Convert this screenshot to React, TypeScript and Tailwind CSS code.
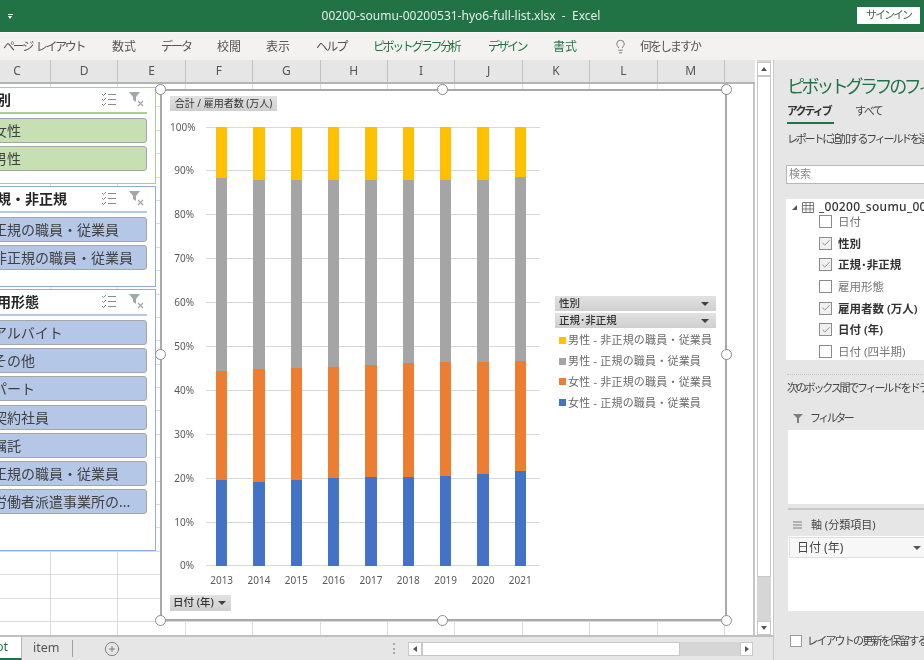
import React from "react";
import { Check, CirclePlus, Lightbulb } from "lucide-react";

const TABS = [
  { label: "ページ レイアウト", cls: "w-[109px] tracking-[-2.3px] [word-spacing:3px]" },
  { label: "数式", cls: "w-[49px]" },
  { label: "データ", cls: "w-[56px] tracking-[-2px]" },
  { label: "校閲", cls: "w-[49px]" },
  { label: "表示", cls: "w-[50px]" },
  { label: "ヘルプ", cls: "w-[57px] tracking-[-1.7px]" },
  { label: "ピボットグラフ分析", cls: "w-[115px] tracking-[-2.4px] text-[#217346]" },
  { label: "デザイン", cls: "w-[65px] tracking-[-2.5px] text-[#217346]" },
  { label: "書式", cls: "w-[60px] text-[#217346]" },
];

const COLUMNS = ["C", "D", "E", "F", "G", "H", "I", "J", "K", "L", "M"];

// heights in percent, bottom to top: blue, orange, gray, yellow
const BARS = [
  { year: 2013, values: [19.6, 24.8, 44.0, 11.6] },
  { year: 2014, values: [19.2, 25.6, 43.1, 12.1] },
  { year: 2015, values: [19.6, 25.6, 42.7, 12.1] },
  { year: 2016, values: [20.1, 25.3, 42.6, 12.0] },
  { year: 2017, values: [20.3, 25.5, 42.2, 12.0] },
  { year: 2018, values: [20.3, 26.0, 41.7, 12.0] },
  { year: 2019, values: [20.5, 26.0, 41.5, 12.0] },
  { year: 2020, values: [21.0, 25.5, 41.5, 12.0] },
  { year: 2021, values: [21.7, 25.0, 41.9, 11.4] },
];

const SEGMENT_COLORS = ["bg-[#4472c4]", "bg-[#ed7d31]", "bg-[#a5a5a5]", "bg-[#ffc000]"];

const LEGEND = [
  { label: "男性 - 非正規の職員・従業員", color: "bg-[#ffc000]" },
  { label: "男性 - 正規の職員・従業員", color: "bg-[#a5a5a5]" },
  { label: "女性 - 非正規の職員・従業員", color: "bg-[#ed7d31]" },
  { label: "女性 - 正規の職員・従業員", color: "bg-[#4472c4]" },
];

const FIELDS = [
  { label: "日付", checked: false },
  { label: "性別", checked: true },
  { label: "正規･非正規", checked: true },
  { label: "雇用形態", checked: false },
  { label: "雇用者数 (万人)", checked: true },
  { label: "日付 (年)", checked: true },
  { label: "日付 (四半期)", checked: false },
];

const MultiSelectIcon = () => (
  <svg width="16" height="15" viewBox="0 0 16 15" fill="none" stroke="#8a8a8a" strokeWidth="1">
    <path d="M1 2l1.5 1.5L5 1M1 7l1.5 1.5L5 6M1 12l1.5 1.5L5 11" />
    <path d="M7 2.5h8M7 7.5h8M7 12.5h8" />
  </svg>
);

const ClearFilterIcon = () => (
  <svg width="16" height="15" viewBox="0 0 16 15">
    <path d="M0 0h11L7 5v5L4 8V5z" fill="#a6a6a6" />
    <path d="M9 9l5 5M14 9l-5 5" stroke="#a6a6a6" strokeWidth="1.2" fill="none" />
  </svg>
);

const Slicer = ({
  title,
  items,
  border,
  fill,
  line,
  height,
}: {
  title: string;
  items: string[];
  border: string;
  fill: string;
  line: string;
  height: string;
}) => (
  <div className={`${height} border-[1.5px] ${border} bg-white pl-[9px] pr-[8px]`}>
    <div className={`flex h-[26px] items-center justify-between border-b-[2px] ${line}`}>
      <span className="ml-[-2px] text-[14px] font-bold leading-none text-[#262626]">{title}</span>
      <div className="mr-[2px] flex w-[44px] justify-between pb-[1px]">
        <MultiSelectIcon />
        <ClearFilterIcon />
      </div>
    </div>
    <div className="mt-[4px] flex flex-col gap-[3.2px]">
      {items.map((item) => (
        <div
          key={item}
          className={`flex h-[25px] items-center whitespace-nowrap rounded-[3px] border border-[#a6a6a6] ${fill} pl-[7px] text-[14px] text-[#404040]`}
        >
          {item}
        </div>
      ))}
    </div>
  </div>
);

const Handle = ({ pos }: { pos: string }) => (
  <div className={`absolute h-[11px] w-[11px] rounded-full border-[1.5px] border-[#8c8c8c] bg-white ${pos}`} />
);

const FieldButton = ({ children, cls }: { children: React.ReactNode; cls: string }) => (
  <div className={`flex items-center bg-gradient-to-b from-[#e2e2e2] to-[#cfcfcf] text-[10.5px] text-[#333333] ${cls}`}>
    {children}
  </div>
);

const Caret = ({ cls = "border-t-[#404040]" }: { cls?: string }) => (
  <span className={`h-0 w-0 border-x-[4px] border-t-[4px] border-x-transparent ${cls}`} />
);

const Chart = () => (
  <div className="absolute left-[160px] top-[5px] flex h-[532px] w-[567px] flex-col border-[2px] border-[#a9a9a9] bg-white pl-[8px] pt-[5px]">
    <FieldButton cls="h-[15px] w-[107px] justify-center !text-[10px]">合計 / 雇用者数 (万人)</FieldButton>

    <div className="mt-[16px] flex">
      {/* y axis labels and gridlines */}
      <div className="relative h-[439px] w-[371px]">
        <div className="flex h-full flex-col-reverse justify-between">
          {[0, 10, 20, 30, 40, 50, 60, 70, 80, 90, 100].map((tick) => (
            <div key={tick} className="flex h-0 items-center">
              <span className="w-[24px] text-right text-[10px] text-[#595959]">{tick}%</span>
              <div className="ml-[12px] h-px w-[334px] bg-[#d9d9d9]" />
            </div>
          ))}
        </div>
        <div className="absolute bottom-0 left-[33px] top-0 flex w-[336px] justify-around">
          {BARS.map((bar) => (
            <div key={bar.year} className="flex h-full w-[11.5px] flex-col-reverse">
              {bar.values.map((value, i) => (
                <div key={i} className={SEGMENT_COLORS[i]} style={{ height: `${value}%` }} />
              ))}
            </div>
          ))}
        </div>
      </div>

      {/* legend */}
      <div className="ml-[14px] mt-[169px] flex w-[161px] flex-col">
        <FieldButton cls="h-[15px] justify-between pl-[4px] pr-[7px] font-medium">
          性別
          <Caret />
        </FieldButton>
        <FieldButton cls="mt-[2px] h-[15px] justify-between pl-[4px] pr-[7px] font-medium">
          正規･非正規
          <Caret />
        </FieldButton>
        <div className="mt-[2px] flex flex-col">
          {LEGEND.map((row) => (
            <div
              key={row.label}
              className="flex h-[20.8px] items-center gap-[2px] whitespace-nowrap pl-[4px] text-[11px] tracking-[0.2px] text-[#6a6a6a]"
            >
              <span className={`h-[7px] w-[7px] ${row.color}`} />
              {row.label}
            </div>
          ))}
        </div>
      </div>
    </div>

    <div className="mt-[7px] flex w-[371px] pl-[33px]">
      <div className="flex w-[336px] justify-around">
        {BARS.map((bar) => (
          <span key={bar.year} className="w-[37px] text-center text-[10px] text-[#595959]">
            {bar.year}
          </span>
        ))}
      </div>
    </div>

    <FieldButton cls="mt-[7px] h-[16px] w-[61px] justify-between pl-[3px] pr-[5px] font-medium">
      日付 (年)
      <Caret />
    </FieldButton>

    <Handle pos="left-[-7px] top-[-7px]" />
    <Handle pos="left-[275px] top-[-7px]" />
    <Handle pos="right-[-7px] top-[-7px]" />
    <Handle pos="left-[-7px] top-[258px]" />
    <Handle pos="right-[-7px] top-[258px]" />
    <Handle pos="bottom-[-7px] left-[-7px]" />
    <Handle pos="bottom-[-7px] left-[275px]" />
    <Handle pos="bottom-[-7px] right-[-7px]" />
  </div>
);

const Sheet = () => (
  <div className="relative h-[551px] overflow-hidden border-r-[2px] border-[#c6c6c6] bg-white">
    {Array.from({ length: 24 }).map((_, row) => (
      <div key={row} className="flex h-[23.4px]">
        {COLUMNS.map((col, i) => (
          <div
            key={col}
            className={`h-full shrink-0 border-b-[1.5px] border-r-[1.5px] border-[#dcdcdc] ${i === 0 ? "w-[51px]" : "w-[67.4px]"}`}
          />
        ))}
      </div>
    ))}
    <div className="absolute left-[-25px] top-[3px] flex w-[181px] flex-col gap-[2px]">
      <Slicer
        title="性別"
        items={["女性", "男性"]}
        border="border-[#a9d18e]"
        fill="bg-[#c6e0b4]"
        line="border-[#a9d18e]"
        height="h-[97px]"
      />
      <Slicer
        title="正規・非正規"
        items={["正規の職員・従業員", "非正規の職員・従業員"]}
        border="border-[#8faadc]"
        fill="bg-[#b4c7e7]"
        line="border-[#b4c7e7]"
        height="h-[101px]"
      />
      <Slicer
        title="雇用形態"
        items={["アルバイト", "その他", "パート", "契約社員", "嘱託", "正規の職員・従業員", "労働者派遣事業所の..."]}
        border="border-[#8faadc]"
        fill="bg-[#b4c7e7]"
        line="border-[#b4c7e7]"
        height="h-[262px]"
      />
    </div>
    <Chart />
  </div>
);

const FieldPanel = () => (
  <div className="flex h-full w-[151px] shrink-0 flex-col overflow-hidden border-l border-[#c8c8c8] bg-[#e6e6e6] pl-[13px] text-[#444444]">
    <div className="mt-[13px] h-[26px] whitespace-nowrap text-[18px] leading-[26px] tracking-[-3.4px] text-[#217346]">
      ピボットグラフのフィールド
    </div>
    <div className="mt-[2px] flex h-[20px] w-[200px] items-center text-[11px]">
      <span className="w-[68px] font-bold tracking-[-2px] text-[#333333]">アクティブ</span>
      <span className="tracking-[-1.5px]">すべて</span>
    </div>
    <div className="mt-[1px] h-[2px] w-[47px] bg-[#217346]" />
    <div className="mt-[8px] whitespace-nowrap text-[11px] leading-[14px] tracking-[-2.2px]">
      レポートに追加するフィールドを選択してください:
    </div>
    <div className="ml-[-1px] mt-[19px] flex h-[19px] w-[160px] shrink-0 items-center border border-[#b8b8b8] bg-white pl-[2px] text-[11px] text-[#8a8a8a]">
      検索
    </div>
    <div className="ml-[-1px] mt-[15px] h-[161px] w-[160px] shrink-0 bg-white pl-[6px] pt-[1px]">
      <div className="flex h-[14px] items-center whitespace-nowrap text-[12px] font-medium tracking-[0.3px] text-[#333333]">
        <span className="h-0 w-0 shrink-0 border-b-[5px] border-l-[5px] border-b-[#555555] border-l-transparent" />
        <svg className="ml-[5px] shrink-0" width="12" height="11" viewBox="0 0 12 11" fill="none" stroke="#7a7a7a">
          <path d="M.5.5h11v10H.5zM.5 3.5h11M.5 7h11M4 .5v10M8 .5v10" />
        </svg>
        <span className="ml-[5px]">_00200_soumu_00200531</span>
      </div>
      <div className="mt-[-3px] flex flex-col">
        {FIELDS.map((field) => (
          <div key={field.label} className="flex h-[21.6px] items-center gap-[6px] whitespace-nowrap pl-[27px] text-[11.5px]">
            <span className={`flex h-[13px] w-[13px] shrink-0 items-center justify-center border border-[#8c8c8c] ${field.checked ? "bg-[#f0f0f0]" : "bg-white"}`}>
              {field.checked && <Check size={10} strokeWidth={1.5} color="#555555" />}
            </span>
            <span className={field.checked ? "font-semibold text-[#333333]" : "text-[#777777]"}>{field.label}</span>
          </div>
        ))}
      </div>
    </div>
    <div className="mt-[14px] h-px w-[160px] shrink-0 border-t border-dotted border-[#c4c4c4]" />
    <div className="mt-[6px] whitespace-nowrap text-[11px] leading-[14px] tracking-[-2.2px]">
      次のボックス間でフィールドをドラッグしてください:
    </div>
    <div className="mt-[16px] flex h-[14px] items-center gap-[7px] pl-[6px] text-[11px]">
      <svg width="10" height="9" viewBox="0 0 10 9">
        <path d="M0 0h10L6 4v5H4V4z" fill="#7f7f7f" />
      </svg>
      <span className="tracking-[-2.5px]">フィルター</span>
    </div>
    <div className="ml-[1px] mt-[5px] h-[74px] w-[160px] shrink-0 bg-white" />
    <div className="ml-[1px] mt-[4px] h-[2px] w-[160px] shrink-0 bg-[#c8c8c8]" />
    <div className="mt-[8px] flex h-[14px] items-center gap-[9px] pl-[6px] text-[11px]">
      <svg width="9" height="8" viewBox="0 0 9 8" fill="none" stroke="#7f7f7f">
        <path d="M0 1h9M0 4h9M0 7h9" />
      </svg>
      軸 (分類項目)
    </div>
    <div className="ml-[1px] mt-[4px] h-[75px] w-[160px] shrink-0 bg-white pl-[1px] pt-px">
      <div className="flex h-[21px] items-center justify-between border border-[#dedede] bg-[#f7f7f7] pl-[7px] pr-[26px] text-[12px]">
        日付 (年)
        <Caret cls="border-t-[#555555]" />
      </div>
    </div>
    <div className="mt-[22px] flex items-center gap-[5px] whitespace-nowrap pl-[3px] text-[11px] tracking-[-1.8px]">
      <span className="h-[12px] w-[12px] shrink-0 border border-[#9a9a9a] bg-white" />
      レイアウトの更新を保留する
    </div>
  </div>
);

const ScrollButton = ({ cls, arrow }: { cls: string; arrow: string }) => (
  <div className={`flex shrink-0 items-center justify-center border border-[#c8c8c8] bg-white ${cls}`}>
    <span className={`h-0 w-0 ${arrow}`} />
  </div>
);

export default function App() {
  return (
    <div className="h-[660px] w-[924px] overflow-hidden bg-white font-['Noto_Sans','Noto_Sans_CJK_JP',sans-serif] blur-[0.4px]">
      {/* title bar */}
      <div className="relative flex h-[32px] items-center justify-center bg-[#217346] text-[12px] text-[#e4eee8]">
        <span className="absolute left-[8px] top-[14px] h-[5px] w-[5px] border-t border-white">
          <span className="mt-[1px] block h-0 w-0 border-x-[2.5px] border-t-[3px] border-x-transparent border-t-white" />
        </span>
        <span className="translate-x-[-1px] whitespace-nowrap">00200-soumu-00200531-hyo6-full-list.xlsx&nbsp; -&nbsp; Excel</span>
        <div className="absolute left-[857px] top-[7px] flex h-[17px] w-[63px] items-center justify-center bg-white text-[11px] tracking-[-2px] text-[#3f6b52]">
          サインイン
        </div>
      </div>

      {/* ribbon tabs */}
      <div className="mt-[1px] flex h-[27px] items-center bg-[#f3f2f1] pl-[3px] text-[12px] text-[#555555]">
        {TABS.map((tab) => (
          <span key={tab.label} className={`shrink-0 whitespace-nowrap ${tab.cls}`}>
            {tab.label}
          </span>
        ))}
        <Lightbulb size={15} strokeWidth={1.3} color="#666666" />
        <span className="ml-[12px] whitespace-nowrap tracking-[-2px]">何をしますか</span>
      </div>

      <div className="flex h-[600px]">
        <div className="flex w-[773px] shrink-0 flex-col">
          <div className="flex flex-1 flex-col">
            <div className="flex">
              <div className="w-[755px] shrink-0">
                {/* column headers */}
                <div className="flex h-[24px] border-b-[2px] border-[#b4b4b4] bg-[#e6e6e6] text-[12px] text-[#555555]">
                  {COLUMNS.map((col, i) => (
                    <div
                      key={col}
                      className={`flex shrink-0 items-center justify-center border-r border-[#c2c2c2] ${i === 0 ? "w-[51px]" : "w-[67.4px]"}`}
                    >
                      <span className={i === 0 ? "ml-[-16px]" : ""}>{col}</span>
                    </div>
                  ))}
                </div>
                <Sheet />
              </div>
              {/* vertical scrollbar */}
              <div className="ml-[2px] flex h-[575px] w-[14px] flex-col bg-[#d6d6d6] pt-[2px]">
                <ScrollButton cls="h-[14px]" arrow="border-x-[3.5px] border-b-[4px] border-x-transparent border-b-[#555555]" />
                <div className="h-[501px] shrink-0 border border-[#c8c8c8] bg-white" />
                <div className="flex-1" />
                <ScrollButton cls="h-[14px]" arrow="border-x-[3.5px] border-t-[4px] border-x-transparent border-t-[#555555]" />
              </div>
            </div>
          </div>
          {/* sheet tabs */}
          <div className="flex h-[25px] shrink-0 items-center border-t-[2px] border-[#c0c0c0] bg-[#e6e6e6] text-[12.5px] text-[#555555]">
            <div className="flex h-full w-[22px] items-center overflow-hidden border-b-[2px] border-r border-b-[#217346] border-r-[#b8b8b8] bg-white text-[#217346]">
              <span className="ml-[-4px]">ot</span>
            </div>
            <span className="ml-[11px] w-[39px]">item</span>
            <span className="h-[17px] w-px bg-[#a0a0a0]" />
            <CirclePlus className="ml-[31px]" size={16} strokeWidth={1.2} color="#666666" />
            <span className="ml-[273px] h-[11px] w-0 border-l-[2px] border-dotted border-[#a8a8a8]" />
            <div className="ml-[13px] flex h-[14px] w-[345px] items-center bg-[#d6d6d6]">
              <ScrollButton cls="h-[14px] w-[14px]" arrow="border-y-[3.5px] border-r-[4px] border-y-transparent border-r-[#555555]" />
              <div className="h-[14px] w-[258px] border border-[#c8c8c8] bg-white" />
              <div className="flex-1" />
              <ScrollButton cls="h-[14px] w-[13px]" arrow="border-y-[3.5px] border-l-[4px] border-y-transparent border-l-[#555555]" />
            </div>
          </div>
        </div>
        <FieldPanel />
      </div>
    </div>
  );
}
